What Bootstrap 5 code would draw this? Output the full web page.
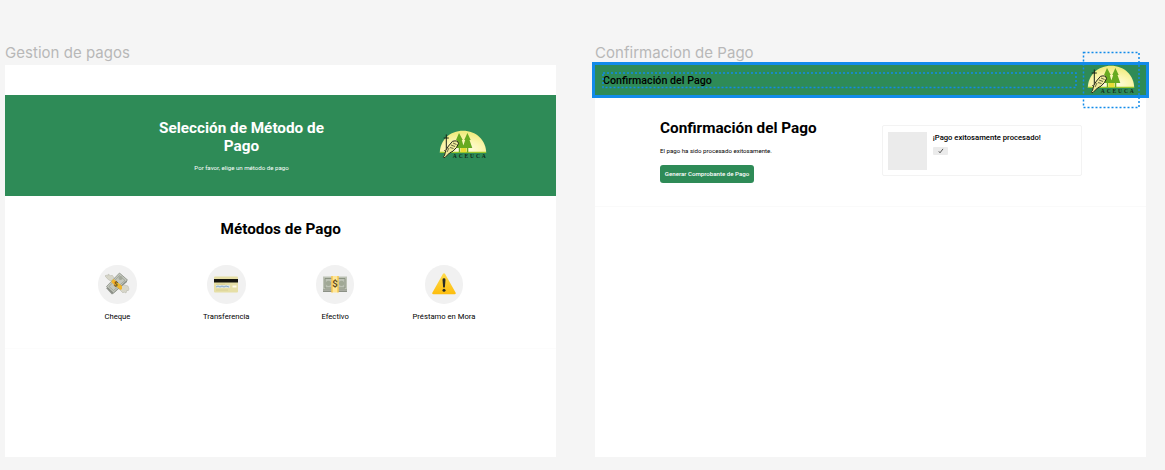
<!DOCTYPE html>
<html lang="es">
<head>
<meta charset="utf-8">
<title>Gestion de pagos</title>
<link href="https://cdn.jsdelivr.net/npm/bootstrap@5.3.0/dist/css/bootstrap.min.css" rel="stylesheet">
<style>
body{background:#f5f5f5;font-family:Roboto,"Liberation Sans",sans-serif;color:#000;height:470px;overflow:hidden}
.board{padding:42px 0 0 5px;gap:38.6px}
.frame-col{width:551.4px}
.frame-label{font:400 15px/22.5px Inter,sans-serif;color:#b8b8b8;letter-spacing:.03px;height:22.5px;white-space:nowrap}
.frame{height:392px;background:#fff}
.green{background:#2e8b57}
.hero{height:101px;margin-top:30.5px;padding:0 69.3px 0 149px}
.hero-text{width:175px;padding-top:23.6px}
.title{font-size:15.3px;line-height:18.4px;font-weight:700;margin:0;white-space:nowrap}
.tiny{font-size:6.13px;line-height:9px;margin:0;white-space:nowrap}
.hero .tiny{margin-top:7.6px}
.logo{width:48px;height:29px;display:block;overflow:visible}
.hero .logo{margin-top:35px}
.topbar .logo{margin-right:11.5px;margin-top:-1.6px}
.bar-title{font-size:10.7px;font-weight:500;line-height:16px;padding-top:1px}
.methods{height:153px;border-bottom:1px solid #fcfcfc;padding-top:23.6px}
.method-row{padding:27.4px 58px 0}
.method{width:108.9px;font-size:7.66px;line-height:10px}
.round{width:38.5px;height:38.5px;background:#f1f1f1;margin-bottom:8px}
.round svg{width:26px;height:26px;display:block;margin-top:-1px}
.topbar{height:31px;padding-left:8px}
.sel{inset:-2.6px -2.6px -2.6px -3px;border:3px solid #128be9}
.dots{stroke:#128be9;stroke-width:1.5;stroke-dasharray:2 2;fill:none}
.over{left:0;top:-14px;width:552px;height:60px;overflow:visible}
.confirm{height:111px;border-bottom:1px solid #fafafa;padding:23.4px 64.6px 0 65px}
.confirm .tiny{margin-top:8.4px}
.btn-pay{width:94px;height:18.5px;border-radius:3px;font-size:6.13px;line-height:9px;font-weight:500;color:#fff;margin-top:10px;padding-bottom:.6px;white-space:nowrap}
.notice{width:199.5px;height:51px;border:1px solid #f3f3f3;border-radius:2px;padding:6px 5px;margin-top:6px;gap:6px}
.thumb{width:38.5px;height:38.5px;background:#ebebeb}
.note-title{font-size:7.66px;line-height:10px;font-weight:500;white-space:nowrap;padding-top:1.2px}
.tag{width:15.5px;height:8px;background:#ebebeb;border-radius:1px;margin-top:3.8px}
</style>
<script src="https://cdn.jsdelivr.net/npm/bootstrap@5.3.0/dist/js/bootstrap.bundle.min.js"></script>
</head>
<body>
<svg width="0" height="0" class="position-absolute">
<defs>
<radialGradient id="sun" cx=".5" cy=".85" r=".75"><stop offset="0" stop-color="#fffdf0"/><stop offset=".55" stop-color="#fbf6b0"/><stop offset="1" stop-color="#f0ec80"/></radialGradient>
<linearGradient id="warn" x1="0" y1="0" x2="0" y2="1"><stop offset="0" stop-color="#ffdc4d"/><stop offset="1" stop-color="#fdbd0d"/></linearGradient>
<symbol id="logo" viewBox="0 0 48 29">
<path d="M.8 22.7C1 10 11 .7 24 .7S47 10 47.2 22.7z" fill="url(#sun)"/>
<path d="M1 22.3H47" stroke="#96c52c" stroke-width="1.2"/>
<path d="M20 3l-3 7h1l-2.2 8h4v4.500h1.400V18h4L22.800 10h1zM28.400 3l-3.200 7h1l-2.700 8h4.300v4.500h1.500V18h4L30.500 10h1.200z" fill="#68aa20"/>
<path d="M21.500 18h6v4h-6z" fill="#e8dc36"/>
<path d="M7.300 4.500V21M4.700 8H9.800" stroke="#172214" stroke-width="1" fill="none"/>
<path d="M5.500 25.500Q6 20 9.500 16L13.500 11.300Q19 9.800 19.500 13.500L17.500 17.500Q14 22 10.500 23L6 27.500Q3 28 5.500 25.500z" fill="#efe99a" stroke="#242719" stroke-width="1"/>
<path d="M11 17.500l3.500 1M12 15l4 1.500M14 13l3.500 1.500M8 22l2-4M5 20l2 2" stroke="#30321d" stroke-width=".7" fill="none"/>
<text x="13.800" y="27.500" font-family="Liberation Serif,serif" font-size="5.500" font-weight="700" textLength="33" fill="#102818">ACEUCA</text>
</symbol>
</defs></svg>
<main class="board d-flex align-items-start">
<section class="frame-col">
<div class="frame-label">Gestion de pagos</div>
<div class="frame overflow-hidden">
<div class="hero green d-flex justify-content-between text-white">
<div class="hero-text text-center"><h1 class="title">Selección de Método de<br>Pago</h1><p class="tiny">Por favor, elige un método de pago</p></div>
<svg class="logo"><use href="#logo"/></svg>
</div>
<div class="methods text-center">
<h2 class="title">Métodos de Pago</h2>
<div class="method-row d-flex">
<div class="method d-flex flex-column align-items-center"><div class="round rounded-circle d-flex justify-content-center align-items-center">
<svg viewBox="0 0 26 26"><g fill="#d7d6c9" stroke="#b5b4a8" stroke-width=".5"><path d="M10 11Q4 10 1 5l1-1 2 1 0-2 3 2 1-1 3 4zM17 13l7 2 1 3-1 2-1-1-1 3-2-1-1 1-4-4z"/></g><path d="M2 17L8 23.500 23 11V9z" fill="#8d918a"/><path d="M2.500 15.500L15.500 2l8 7-14 13z" fill="#c3c6bd" stroke="#80857a" stroke-width=".7"/><path d="M5 15.500L15.500 4.500l5.500 5-11.500 10z" fill="none" stroke="#92998b" stroke-width=".7"/><circle cx="16.500" cy="7" r="2" fill="#a4a99c"/><path d="M7.500 10l2-2 8.500 7v3l-1.500 1-9-7.500z" fill="#f0b62d"/><text x="10" y="15.500" transform="rotate(10 12 13)" font-size="7" font-weight="700" fill="#5f4510">$</text></svg></div>Cheque</div>
<div class="method d-flex flex-column align-items-center"><div class="round rounded-circle d-flex justify-content-center align-items-center">
<svg viewBox="0 0 26 26"><rect x="1" y="5.500" width="24" height="16" rx="1" fill="#e6dfa6"/><path d="M1 8h24v3.500H1z" fill="#15150e"/><path d="M3 14h14v3H3z" fill="#dce5df"/><path d="M3 16l2-1 2 1 2-1 2 1 2-1 3 1" fill="none" stroke="#6f9ac8" stroke-width=".8"/><path d="M19.500 14.500h4v2h-4z" fill="#fffbe8"/><path d="M3 13.200h9M3 19h12" stroke="#c9be83" stroke-width=".5"/></svg></div>Transferencia</div>
<div class="method d-flex flex-column align-items-center"><div class="round rounded-circle d-flex justify-content-center align-items-center">
<svg viewBox="0 0 26 26"><path d="M1 6h24v15H1z" fill="#858a7f"/><path d="M1 5.500h24v13H1z" fill="#bdc2b5"/><path d="M3 7.500h20v9.500H3z" fill="none" stroke="#868e7c" stroke-width=".9"/><circle cx="6.500" cy="12.300" r="2.600" fill="#a0a895"/><circle cx="19.500" cy="12.300" r="2.600" fill="#a0a895"/><path d="M1 19.700h24" stroke="#d0d2c8" stroke-width=".6"/><path d="M9.500 5h7v16.500h-7z" fill="#ffe79a"/><path d="M9.500 5h1v16.500h-1zM15.500 5h1v16.500h-1z" fill="#f4b92c"/><text x="10.300" y="16" font-size="9.500" font-weight="700" fill="#624b1b">$</text></svg></div>Efectivo</div>
<div class="method d-flex flex-column align-items-center"><div class="round rounded-circle d-flex justify-content-center align-items-center">
<svg viewBox="0 0 26 26"><path d="M12 2.800Q13 1.500 14 2.800L24.700 21.700Q25.200 23.200 23.500 23.200H2.500Q.8 23.200 1.300 21.700z" fill="url(#warn)"/><path d="M11.500 8.700Q11.500 7.300 13 7.300t1.500 1.400l-.6 7.300Q13 17.500 12.100 16z" fill="#292b25"/><circle cx="13" cy="19.200" r="1.500" fill="#292b25"/></svg></div>Préstamo en Mora</div>
</div></div></div>
</section>
<section class="frame-col">
<div class="frame-label">Confirmacion de Pago</div>
<div class="frame">
<div class="topbar green position-relative d-flex align-items-center justify-content-between">
<span class="bar-title">Confirmación del Pago</span>
<svg class="logo"><use href="#logo"/></svg>
<div class="sel position-absolute"></div>
<svg class="over position-absolute" viewBox="0 0 552 60"><rect class="dots" x="8" y="22" width="473" height="14.500"/><rect class="dots" x="488.500" y="1.500" width="55.500" height="55"/></svg>
</div>
<div class="confirm d-flex justify-content-between">
<div><h2 class="title">Confirmación del Pago</h2><p class="tiny">El pago ha sido procesado exitosamente.</p><div class="btn-pay green d-flex align-items-center justify-content-center">Generar Comprobante de Pago</div></div>
<div class="notice d-flex"><div class="thumb flex-shrink-0"></div><div><div class="note-title">¡Pago exitosamente procesado!</div><div class="tag d-flex align-items-center justify-content-center"><svg width="6" height="6" viewBox="0 0 6 6"><path d="M.8 3.300l1.200 1.500L5 .9" fill="none" stroke="#444" stroke-width=".9"/></svg></div></div></div>
</div></div>
</section>
</main>
</body>
</html>
